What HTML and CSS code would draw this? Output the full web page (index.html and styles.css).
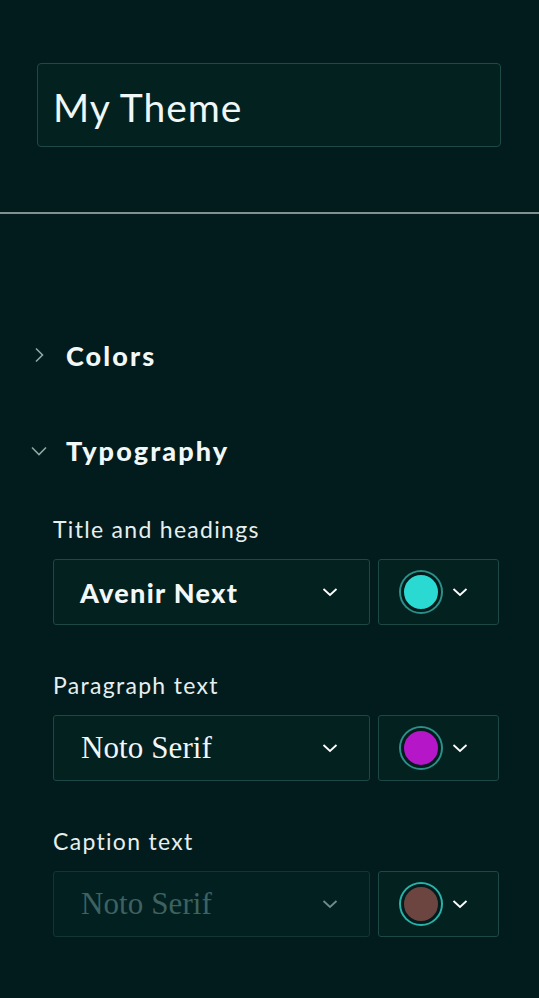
FILE: index.html
```html
<!DOCTYPE html>
<html lang="en">
<head>
<meta charset="utf-8">
<title>Theme</title>
<link rel="stylesheet" href="styles.css">
</head>
<body>
<div class="top">
  <div class="name-input">My Theme</div>
</div>
<hr class="divider">
<div class="sections">
  <div class="section-head collapsed">
    <span class="caret-box"><svg class="caret" width="14" height="16" viewBox="0 0 14 16"><path d="M5 1.5 L11.5 8 L5 14.5" fill="none" stroke="#8fa8a6" stroke-width="1.6"/></svg></span>
    <span>Colors</span>
  </div>
  <div class="section-head open">
    <span class="caret-box"><svg class="caret" width="16" height="10" viewBox="0 0 16 10"><path d="M1 1.5 L8 8.5 L15 1.5" fill="none" stroke="#8fa8a6" stroke-width="1.6"/></svg></span>
    <span>Typography</span>
  </div>
  <div class="fields">
    <div class="field">
      <div class="label">Title and headings</div>
      <div class="row">
        <div class="select">
          <span class="val sans">Avenir Next</span>
          <svg class="chev" width="16" height="10" viewBox="0 0 16 10"><path d="M1.5 2 L8 8 L14.5 2" fill="none" stroke="#ffffff" stroke-width="1.8"/></svg>
        </div>
        <div class="color">
          <span class="swatch" style="background:#2bd9d3"></span>
          <svg class="chev" width="16" height="10" viewBox="0 0 16 10"><path d="M1.5 2 L8 8 L14.5 2" fill="none" stroke="#ffffff" stroke-width="1.8"/></svg>
        </div>
      </div>
    </div>
    <div class="field">
      <div class="label">Paragraph text</div>
      <div class="row">
        <div class="select">
          <span class="val serif">Noto Serif</span>
          <svg class="chev" width="16" height="10" viewBox="0 0 16 10"><path d="M1.5 2 L8 8 L14.5 2" fill="none" stroke="#ffffff" stroke-width="1.8"/></svg>
        </div>
        <div class="color">
          <span class="swatch" style="background:#b516c8"></span>
          <svg class="chev" width="16" height="10" viewBox="0 0 16 10"><path d="M1.5 2 L8 8 L14.5 2" fill="none" stroke="#ffffff" stroke-width="1.8"/></svg>
        </div>
      </div>
    </div>
    <div class="field">
      <div class="label">Caption text</div>
      <div class="row">
        <div class="select disabled">
          <span class="val serif">Noto Serif</span>
          <svg class="chev" width="16" height="10" viewBox="0 0 16 10"><path d="M1.5 2 L8 8 L14.5 2" fill="none" stroke="#6f8c8a" stroke-width="1.8"/></svg>
        </div>
        <div class="color">
          <span class="swatch bright" style="background:#6d4540"></span>
          <svg class="chev" width="16" height="10" viewBox="0 0 16 10"><path d="M1.5 2 L8 8 L14.5 2" fill="none" stroke="#ffffff" stroke-width="1.8"/></svg>
        </div>
      </div>
    </div>
  </div>
</div>
</body>
</html>
```
FILE: styles.css
```css
html, body {
  margin: 0;
  padding: 0;
}
body {
  background: #021b1c;
  color: #eef5f5;
  font-family: Lato, "Noto Sans", sans-serif;
  width: 539px;
  height: 998px;
  overflow: hidden;
}
.top {
  padding: 63px 38px 0 37px;
}
.name-input {
  height: 78px;
  border: 1px solid #1e4946;
  border-radius: 4px;
  background: #03221f;
  display: flex;
  align-items: center;
  padding: 4px 15px 0 15px;
  font-size: 39px;
  letter-spacing: 1px;
  color: #f0f7f7;
}
.divider {
  margin: 65px 0 0 0;
  border: 0;
  height: 2px;
  background: #7f9190;
}
.sections {
  padding: 121px 40px 0 31px;
}
.section-head {
  display: flex;
  align-items: center;
  height: 40px;
  font-weight: 900;
  font-size: 27px;
  color: #f2f7f7;
  letter-spacing: 2.1px;
}
.caret-box {
  width: 35px;
  flex: none;
  display: flex;
  align-items: center;
}
.section-head.open .caret-box {
  padding-top: 2px;
}
.section-head.open {
  margin-top: 55px;
}
.fields {
  padding-left: 22px;
  display: flex;
  flex-direction: column;
  gap: 45px;
  margin-top: 44px;
}
.field {
  display: flex;
  flex-direction: column;
  gap: 15px;
}
.label {
  height: 30px;
  line-height: 30px;
  font-size: 23px;
  color: #e6efef;
  letter-spacing: 1.3px;
}
.row {
  display: flex;
  gap: 8px;
  height: 66px;
}
.select {
  width: 317px;
  box-sizing: border-box;
  border: 1px solid #1d4845;
  border-radius: 3px;
  background: #03211f;
  display: flex;
  align-items: center;
  justify-content: space-between;
  padding: 0 31px 0 26px;
}
.select.disabled {
  border-color: #123634;
  background: #022020;
}
.val {
  color: #f2f7f7;
}
.val.sans {
  font-weight: 900;
  font-size: 27px;
  letter-spacing: 1.3px;
}
.val.serif {
  font-family: "Liberation Serif", serif;
  font-size: 31px;
  letter-spacing: 0.1px;
  padding-left: 1px;
}
.disabled .val {
  color: #3d6260;
}
.color {
  width: 121px;
  box-sizing: border-box;
  border: 1px solid #1d4845;
  border-radius: 3px;
  background: #03211f;
  display: flex;
  align-items: center;
  padding-left: 22px;
  gap: 11px;
}
.swatch {
  width: 34px;
  height: 34px;
  border-radius: 50%;
  border: 3px solid #021b1c;
  box-shadow: 0 0 0 2px #2c8f88;
  flex: none;
}
.swatch.bright {
  box-shadow: 0 0 0 2px #2ab3a8;
}
.color .chev {
  flex: none;
}
```
